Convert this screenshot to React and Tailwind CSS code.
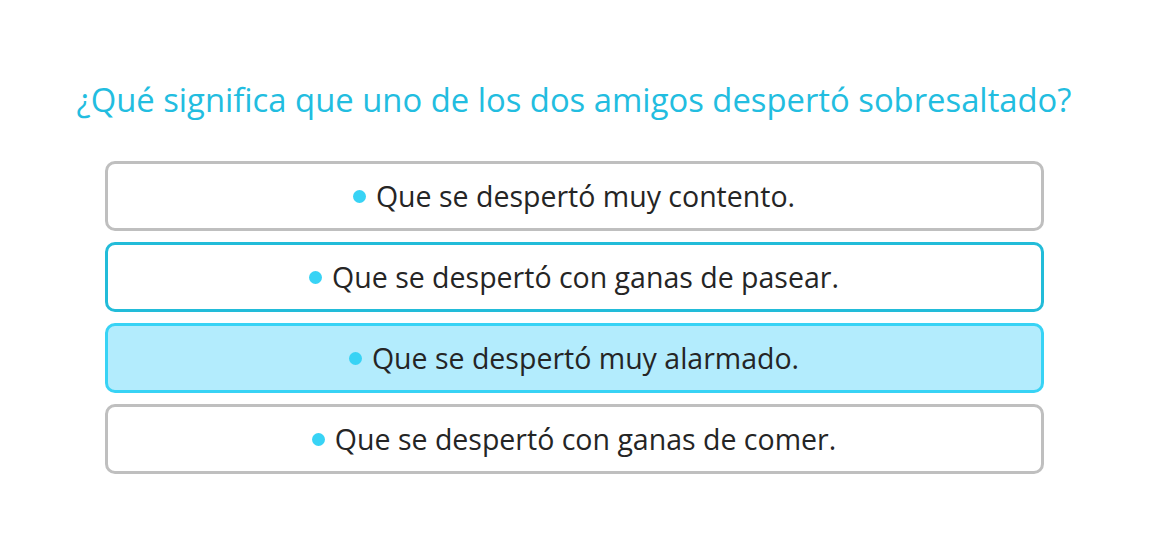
import React from "react";

const options = [
  { text: "Que se despertó muy contento.", state: "idle" },
  { text: "Que se despertó con ganas de pasear.", state: "hover" },
  { text: "Que se despertó muy alarmado.", state: "selected" },
  { text: "Que se despertó con ganas de comer.", state: "idle" },
];

const boxStyles = {
  idle: "border-[#bfbfbf] bg-white",
  hover: "border-[#22bcd9] bg-white",
  selected: "border-[#38d3f5] bg-[#b3ecfd]",
};

export default function App() {
  return (
    <div className="min-h-screen bg-white font-['Open_Sans',sans-serif] pt-[78px]">
      <h1 className="pr-[5px] text-center text-[32.8px] leading-[44px] text-[#22bde0]">
        ¿Qué significa que uno de los dos amigos despertó sobresaltado?
      </h1>
      <div className="mx-auto mt-[39px] box-content flex w-[939px] flex-col gap-[11px] pr-[5px]">
        {options.map((o) => (
          <button
            key={o.text}
            className={`flex h-[70px] items-center justify-center gap-[10px] rounded-[10px] border-[3px] text-[28.5px] text-[#252525] ${boxStyles[o.state]}`}
          >
            <span className="h-[13px] w-[13px] rounded-full bg-[#38d3f5]" />
            <span>{o.text}</span>
          </button>
        ))}
      </div>
    </div>
  );
}
